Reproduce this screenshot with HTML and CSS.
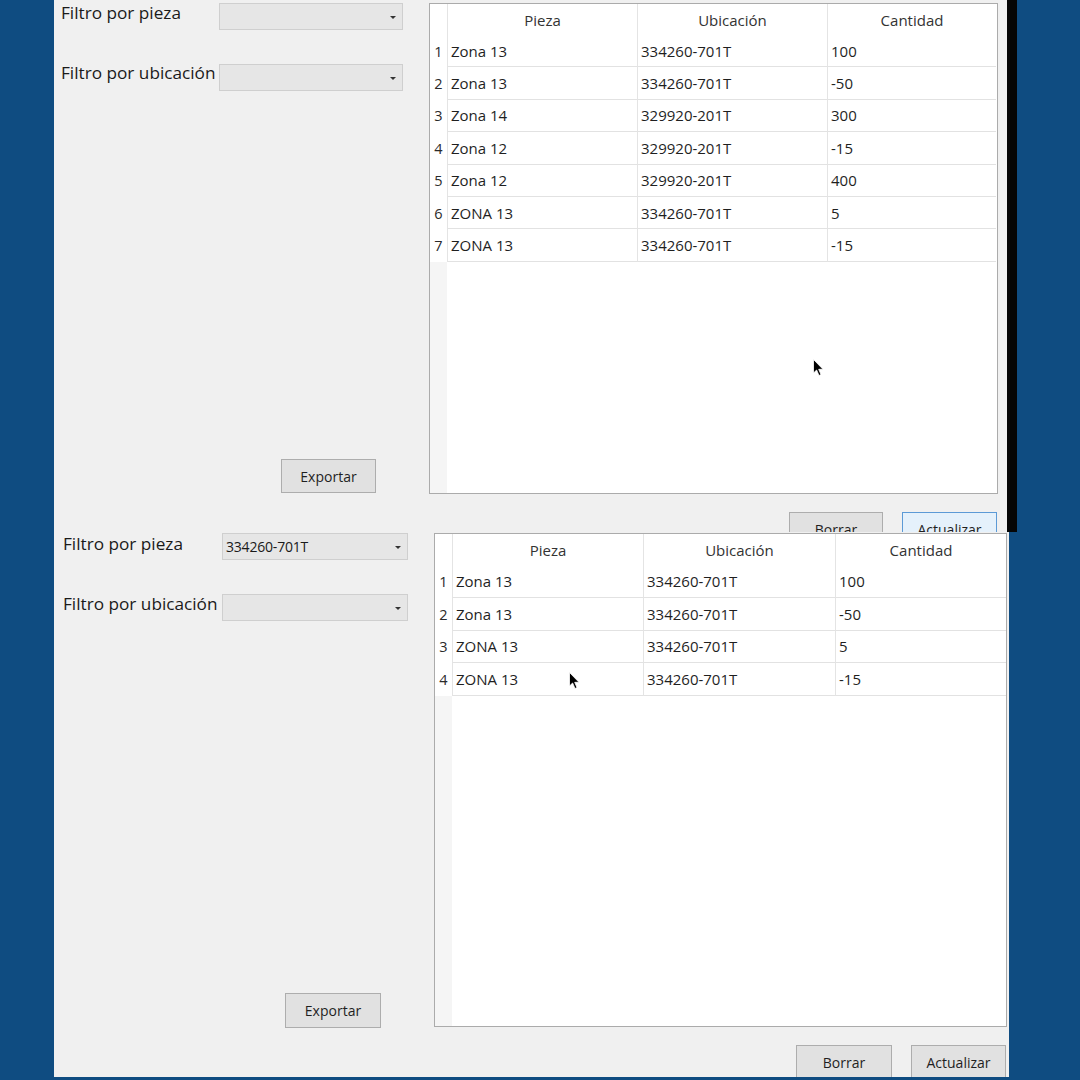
FILE: index.html
```html
<!DOCTYPE html>
<html lang="es">
<head>
<meta charset="utf-8">
<title>Inventario</title>
<link rel="stylesheet" href="styles.css">
</head>
<body>
<div class="stage">
  <div class="win win-top">
    <div class="panel panel-top">
      <div class="side">
        <div class="filter f1">
          <span class="lbl">Filtro por pieza</span>
          <div class="combo"><span class="val"></span><i class="arrow"></i></div>
        </div>
        <div class="filter f2">
          <span class="lbl">Filtro por ubicación</span>
          <div class="combo"><span class="val"></span><i class="arrow"></i></div>
        </div>
        <button class="btn export">Exportar</button>
      </div>
      <div class="main">
        <div class="table">
          <div class="row head">
            <div class="rh"></div><div class="c c1">Pieza</div><div class="c c2">Ubicación</div><div class="c c3">Cantidad</div>
          </div>
          <div class="row"><div class="rh">1</div><div class="c c1">Zona 13</div><div class="c c2">334260-701T</div><div class="c c3">100</div></div>
          <div class="row"><div class="rh">2</div><div class="c c1">Zona 13</div><div class="c c2">334260-701T</div><div class="c c3">-50</div></div>
          <div class="row"><div class="rh">3</div><div class="c c1">Zona 14</div><div class="c c2">329920-201T</div><div class="c c3">300</div></div>
          <div class="row"><div class="rh">4</div><div class="c c1">Zona 12</div><div class="c c2">329920-201T</div><div class="c c3">-15</div></div>
          <div class="row"><div class="rh">5</div><div class="c c1">Zona 12</div><div class="c c2">329920-201T</div><div class="c c3">400</div></div>
          <div class="row"><div class="rh">6</div><div class="c c1">ZONA 13</div><div class="c c2">334260-701T</div><div class="c c3">5</div></div>
          <div class="row"><div class="rh">7</div><div class="c c1">ZONA 13</div><div class="c c2">334260-701T</div><div class="c c3">-15</div></div>
          <div class="filler"></div>
        </div>
        <div class="actions">
          <button class="btn">Borrar</button>
          <button class="btn primary">Actualizar</button>
        </div>
      </div>
      <svg class="cursor cursor-top" width="12" height="18" viewBox="0 0 12 18"><path d="M0.5 0.5 L0.5 14 L3.6 11 L6 16.5 L8 15.6 L5.7 10.3 L10 10.3 Z" fill="#000" stroke="#fff" stroke-width="0.8"/></svg>
    </div>
    <div class="bezel"></div>
  </div>

  <div class="win win-bottom">
    <div class="panel panel-bottom">
      <div class="side">
        <div class="filter f1">
          <span class="lbl">Filtro por pieza</span>
          <div class="combo"><span class="val">334260-701T</span><i class="arrow"></i></div>
        </div>
        <div class="filter f2">
          <span class="lbl">Filtro por ubicación</span>
          <div class="combo"><span class="val"></span><i class="arrow"></i></div>
        </div>
        <button class="btn export">Exportar</button>
      </div>
      <div class="main">
        <div class="table">
          <div class="row head">
            <div class="rh"></div><div class="c c1">Pieza</div><div class="c c2">Ubicación</div><div class="c c3">Cantidad</div>
          </div>
          <div class="row"><div class="rh">1</div><div class="c c1">Zona 13</div><div class="c c2">334260-701T</div><div class="c c3">100</div></div>
          <div class="row"><div class="rh">2</div><div class="c c1">Zona 13</div><div class="c c2">334260-701T</div><div class="c c3">-50</div></div>
          <div class="row"><div class="rh">3</div><div class="c c1">ZONA 13</div><div class="c c2">334260-701T</div><div class="c c3">5</div></div>
          <div class="row"><div class="rh">4</div><div class="c c1">ZONA 13</div><div class="c c2">334260-701T</div><div class="c c3">-15</div></div>
          <div class="filler"></div>
        </div>
        <div class="actions">
          <button class="btn">Borrar</button>
          <button class="btn">Actualizar</button>
        </div>
      </div>
      <svg class="cursor cursor-bottom" width="12" height="18" viewBox="0 0 12 18"><path d="M0.5 0.5 L0.5 14 L3.6 11 L6 16.5 L8 15.6 L5.7 10.3 L10 10.3 Z" fill="#000" stroke="#fff" stroke-width="0.8"/></svg>
    </div>
  </div>
</div>
</body>
</html>
```

FILE: styles.css
```css
* { box-sizing: border-box; }

html, body {
  margin: 0;
  padding: 0;
}

body {
  width: 1080px;
  height: 1080px;
  overflow: hidden;
  background: #0f4c81;
  font-family: "Open Sans", "Noto Sans", sans-serif;
  color: #1f1f1f;
}

.stage {
  display: flex;
  flex-direction: column;
  padding-left: 54px;
}

.win {
  display: flex;
  flex: none;
}

.win-top {
  height: 532px;
}

.win-bottom {
  height: 545px;
}

.panel {
  position: relative;
  display: flex;
  background: #f0f0f0;
  overflow: hidden;
}

.panel-top {
  width: 953px;
  height: 532px;
}

.panel-bottom {
  width: 955px;
  height: 545px;
}

.bezel {
  width: 10px;
  background: #050505;
}

/* ---- left column ---- */
.side {
  flex: none;
  display: flex;
  flex-direction: column;
  align-items: flex-start;
}

.filter {
  display: flex;
  align-items: flex-start;
  flex: none;
}

.lbl {
  flex: none;
  font-size: 17.2px;
  line-height: 24px;
  color: #1a1a1a;
  white-space: nowrap;
}

.combo {
  flex: none;
  position: relative;
  height: 27px;
  background: #e6e6e6;
  border: 1px solid #cfcfcf;
  display: flex;
  align-items: center;
  padding-left: 3px;
}

.combo .val {
  font-size: 14px;
  color: #1a1a1a;
  letter-spacing: -0.2px;
}

.combo .arrow {
  position: absolute;
  right: 6px;
  top: 12px;
  width: 0;
  height: 0;
  border-left: 3px solid transparent;
  border-right: 3px solid transparent;
  border-top: 3px solid #333;
}

.btn {
  flex: none;
  font-family: "Open Sans", "Noto Sans", sans-serif;
  font-size: 14px;
  color: #1f1f1f;
  background: #e1e1e1;
  border: 1px solid #adadad;
  padding: 0;
  height: 34px;
  width: 95px;
}

.btn.primary {
  background: #e5f1fb;
  border-color: #5c9ad6;
}

/* top panel geometry */
.panel-top .side { width: 375px; }
.panel-top .lbl { width: 165px; padding-left: 7px; }
.panel-top .combo { width: 184px; margin-top: 3px; }
.panel-top .f1 .lbl { margin-top: 1px; }
.panel-top .f2 { margin-top: 31px; }
.panel-top .export { margin-top: 368px; margin-left: 227px; }

/* bottom panel geometry */
.panel-bottom .side { width: 380px; }
.panel-bottom .lbl { width: 168px; padding-left: 9px; }
.panel-bottom .combo { width: 186px; margin-top: 1px; }
.panel-bottom .f2 { margin-top: 32px; }
.panel-bottom .f2 .combo { margin-top: 2px; }
.panel-bottom .export { margin-top: 372px; margin-left: 231px; width: 96px; height: 35px; }

/* ---- table ---- */
.main {
  flex: none;
  display: flex;
  flex-direction: column;
}

.table {
  flex: none;
  display: flex;
  flex-direction: column;
  background: #fff;
  border: 1px solid #ababab;
  overflow: hidden;
}

.row {
  display: grid;
  flex: none;
  font-size: 15px;
  color: #1f1f1f;
}

.row > div {
  display: flex;
  align-items: center;
  white-space: nowrap;
}

.row .rh {
  justify-content: center;
  font-size: 14.5px;
  color: #2a2a2a;
}

.row .c {
  padding-left: 3px;
  border-left: 1px solid #e4e4e4;
  border-bottom: 1px solid #e2e2e2;
}

.row.head .c {
  justify-content: center;
  padding-left: 0;
  border-bottom: none;
  color: #333;
}

.filler {
  flex: 1;
  background: linear-gradient(to right, #f5f5f5 0, #f5f5f5 var(--rhw), #fff var(--rhw));
}

.panel-top .table { width: 569px; height: 491px; margin-top: 3px; --rhw: 17px; }
.panel-top .row { grid-template-columns: 17px 190px 190px 169px; height: 32.4px; }
.panel-top .row.head { height: 31px; }

.panel-bottom .table { width: 573px; height: 494px; margin-top: 1px; --rhw: 17px; }
.panel-bottom .row { grid-template-columns: 17px 191px 192px 171px; height: 32.6px; }
.panel-bottom .row.head { height: 31.5px; }

.actions {
  flex: none;
  display: flex;
  justify-content: flex-end;
  gap: 19px;
  margin-top: 18px;
  padding-right: 1px;
}

.panel-top .actions .btn:first-child { width: 94px; }
.panel-bottom .actions .btn:first-child { width: 96px; }

/* ---- pointer overlays ---- */
.cursor {
  position: absolute;
}

.cursor-top {
  left: 759px;
  top: 359px;
}

.cursor-bottom {
  left: 515px;
  top: 140px;
}
```
